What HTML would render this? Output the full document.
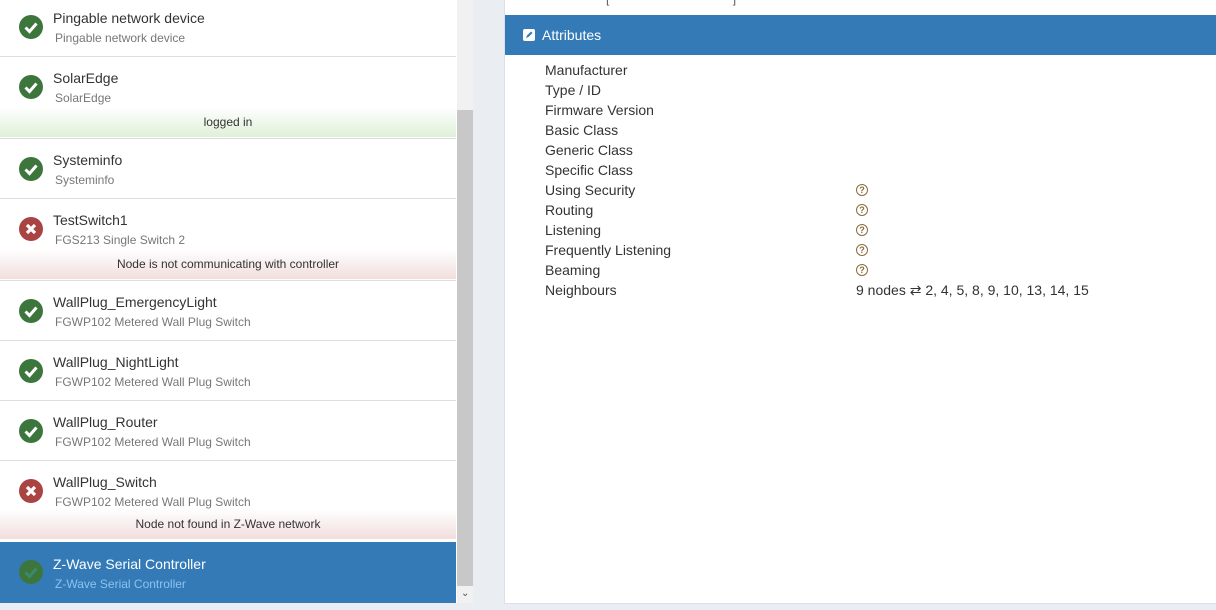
<!DOCTYPE html>
<html><head><style>
*{box-sizing:border-box;margin:0;padding:0}
body{width:1216px;height:610px;overflow:hidden;background:#eaedf1;font-family:"Liberation Sans",Arial,sans-serif;position:relative}
#list{position:absolute;left:0;top:0;width:457px;height:603px;background:#fff;overflow:hidden}
.row{position:absolute;left:0;width:456px;border-bottom:1px solid #ddd;background:#fff}
.row .t{position:absolute;left:53px;font-size:14px;color:#333}
.row .s{position:absolute;left:55px;font-size:12px;color:#777}
.ic{position:absolute;left:19px;width:24px;height:24px;border-radius:50%}
.ok{background:#3c763d}.bad{background:#a94442}
.ic svg{position:absolute;left:0;top:0}
.st{position:absolute;left:0;width:456px;height:30px;font-size:12px;color:#333;text-align:center;line-height:30px}
.g{background:linear-gradient(#fff,#dff0d8)}
.r{background:linear-gradient(#fff,#f2dede)}
.sel{background:#337ab7}
.sel .t{color:#fff}.sel .s{color:#8ec2ef}
#sb{position:absolute;left:457px;top:0;width:16px;height:603px;background:#f1f1f1}
#thumb{position:absolute;left:0;top:110px;width:16px;height:476px;background:#c8c8c8}
#panel{position:absolute;left:504px;top:0;width:712px;height:604px;background:#fff;border-bottom:1px solid #dde;border-left:1px solid #dde}
#hd{position:absolute;left:0;top:15px;width:711px;height:40px;background:#337ab7;color:#fff;font-size:14px;line-height:40px;padding-left:37px}
#hd svg{position:absolute;left:18px;top:14px}
.a{position:absolute;left:40px;font-size:14px;color:#333}
.q{position:absolute;left:351px;width:12px;height:12px;border:1.3px solid #8a6d3b;border-radius:50%;font-size:9px;color:#8a6d3b;text-align:center;line-height:10px;font-weight:bold}
</style></head><body>
<div id="list">
<div class="row" style="top:-4px;height:61px"><div class="ic ok" style="top:19px"><svg width="24" height="24"><path d="M6.5 12.5l4 4 7-8" stroke="#fff" stroke-width="3" fill="none"/></svg></div><div class="t" style="top:14px">Pingable network device</div><div class="s" style="top:35px">Pingable network device</div></div>
<div class="row" style="top:57px;height:82px"><div class="ic ok" style="top:18px"><svg width="24" height="24"><path d="M6.5 12.5l4 4 7-8" stroke="#fff" stroke-width="3" fill="none"/></svg></div><div class="t" style="top:13px">SolarEdge</div><div class="s" style="top:34px">SolarEdge</div><div class="st g" style="top:50px">logged in</div></div>
<div class="row" style="top:139px;height:60px"><div class="ic ok" style="top:18px"><svg width="24" height="24"><path d="M6.5 12.5l4 4 7-8" stroke="#fff" stroke-width="3" fill="none"/></svg></div><div class="t" style="top:13px">Systeminfo</div><div class="s" style="top:34px">Systeminfo</div></div>
<div class="row" style="top:199px;height:82px"><div class="ic bad" style="top:18px"><svg width="24" height="24"><path d="M8 8l8 8M16 8l-8 8" stroke="#fff" stroke-width="3.2"/></svg></div><div class="t" style="top:13px">TestSwitch1</div><div class="s" style="top:34px">FGS213 Single Switch 2</div><div class="st r" style="top:50px">Node is not communicating with controller</div></div>
<div class="row" style="top:281px;height:60px"><div class="ic ok" style="top:18px"><svg width="24" height="24"><path d="M6.5 12.5l4 4 7-8" stroke="#fff" stroke-width="3" fill="none"/></svg></div><div class="t" style="top:13px">WallPlug_EmergencyLight</div><div class="s" style="top:34px">FGWP102 Metered Wall Plug Switch</div></div>
<div class="row" style="top:341px;height:60px"><div class="ic ok" style="top:18px"><svg width="24" height="24"><path d="M6.5 12.5l4 4 7-8" stroke="#fff" stroke-width="3" fill="none"/></svg></div><div class="t" style="top:13px">WallPlug_NightLight</div><div class="s" style="top:34px">FGWP102 Metered Wall Plug Switch</div></div>
<div class="row" style="top:401px;height:60px"><div class="ic ok" style="top:18px"><svg width="24" height="24"><path d="M6.5 12.5l4 4 7-8" stroke="#fff" stroke-width="3" fill="none"/></svg></div><div class="t" style="top:13px">WallPlug_Router</div><div class="s" style="top:34px">FGWP102 Metered Wall Plug Switch</div></div>
<div class="row" style="top:461px;height:82px;border:none"><div class="ic bad" style="top:18px"><svg width="24" height="24"><path d="M8 8l8 8M16 8l-8 8" stroke="#fff" stroke-width="3.2"/></svg></div><div class="t" style="top:13px">WallPlug_Switch</div><div class="s" style="top:34px">FGWP102 Metered Wall Plug Switch</div><div class="st r" style="top:48px">Node not found in Z-Wave network</div></div>
<div class="row sel" style="top:542px;height:61px;border:none"><div class="ic ok" style="top:18px"><svg width="24" height="24"><path d="M6.5 12.5l4 4 7-8" stroke="#3a8a6a" stroke-width="3" fill="none"/></svg></div><div class="t" style="top:14px">Z-Wave Serial Controller</div><div class="s" style="top:35px">Z-Wave Serial Controller</div></div>
</div>
<div id="sb"><div id="thumb"></div><div style="position:absolute;left:4px;top:588px;font-size:10px;color:#555">&#8964;</div></div>
<div id="panel">
<div style="position:absolute;left:101px;top:-8px;font-size:12px;color:#555">[&nbsp;&nbsp;&nbsp;&nbsp;&nbsp;&nbsp;&nbsp;&nbsp;&nbsp;&nbsp;&nbsp;&nbsp;&nbsp;&nbsp;&nbsp;&nbsp;&nbsp;&nbsp;&nbsp;&nbsp;&nbsp;&nbsp;&nbsp;&nbsp;&nbsp;&nbsp;&nbsp;&nbsp;&nbsp;&nbsp;&nbsp;&nbsp;&nbsp;&nbsp;&nbsp;&nbsp;&nbsp;]</div>
<div id="hd"><svg width="12" height="12"><rect width="12" height="12" rx="2" fill="#fff"/><path d="M3 9l1-2.5 4-4 1.5 1.5-4 4z" fill="#337ab7"/></svg>Attributes</div>
<div class="a" style="top:62px">Manufacturer</div>
<div class="a" style="top:82px">Type / ID</div>
<div class="a" style="top:102px">Firmware Version</div>
<div class="a" style="top:122px">Basic Class</div>
<div class="a" style="top:142px">Generic Class</div>
<div class="a" style="top:162px">Specific Class</div>
<div class="a" style="top:182px">Using Security</div><div class="q" style="top:184px">?</div>
<div class="a" style="top:202px">Routing</div><div class="q" style="top:204px">?</div>
<div class="a" style="top:222px">Listening</div><div class="q" style="top:224px">?</div>
<div class="a" style="top:242px">Frequently Listening</div><div class="q" style="top:244px">?</div>
<div class="a" style="top:262px">Beaming</div><div class="q" style="top:264px">?</div>
<div class="a" style="top:282px">Neighbours</div>
<div class="a" style="top:282px;left:351px">9 nodes &#8644; 2, 4, 5, 8, 9, 10, 13, 14, 15</div>
</div>
</body></html>
